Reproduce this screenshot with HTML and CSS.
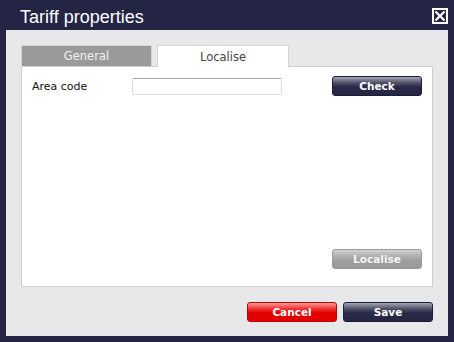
FILE: index.html
```html
<!DOCTYPE html>
<html>
<head>
<meta charset="utf-8">
<link rel="stylesheet" href="styles.css">
</head>
<body>
<div class="dialog">
  <div class="titlebar">
    <span class="title">Tariff properties</span>
    <span class="close"><svg width="12" height="12" viewBox="0 0 12 12"><path d="M1.5 1.5 L10.5 10.5 M10.5 1.5 L1.5 10.5" stroke="#fff" stroke-width="2.2" fill="none"/></svg></span>
  </div>
  <div class="body">
    <div class="tabs">
      <div class="tab inactive">General</div>
      <div class="tab active">Localise</div>
    </div>
    <div class="panel">
      <div class="row">
        <label class="label">Area code</label>
        <input class="input" type="text">
        <button class="btn dark check">Check</button>
      </div>
      <div class="bottom">
        <button class="btn grey">Localise</button>
      </div>
    </div>
    <div class="footer">
      <button class="btn red">Cancel</button>
      <button class="btn dark">Save</button>
    </div>
  </div>
</div>
</body>
</html>
```
FILE: styles.css
```css
html, body {
  margin: 0;
  padding: 0;
  background: #242444;
}
.dialog {
  width: 454px;
  height: 342px;
  background: #242444;
  display: flex;
  flex-direction: column;
  font-family: "DejaVu Sans", sans-serif;
}
.titlebar {
  height: 30px;
  display: flex;
  align-items: flex-start;
  justify-content: space-between;
  padding: 0 6px 0 20px;
  box-sizing: border-box;
}
.title {
  font-family: "Liberation Sans", Arial, sans-serif;
  font-size: 18px;
  color: #fff;
  margin-top: 7px;
  line-height: 20px;
}
.close {
  margin-top: 8px;
  width: 16px;
  height: 16px;
  box-sizing: border-box;
  border: 2px solid #fff;
  display: flex;
  align-items: center;
  justify-content: center;
}
.close svg { display: block; }
.body {
  margin: 0 6px 6px;
  background: #e8e8ea;
  flex: 1;
  padding: 15px 15px 14px;
  display: flex;
  flex-direction: column;
}
.tabs {
  display: flex;
  gap: 5px;
  height: 21px;
}
.tab {
  box-sizing: border-box;
  height: 21px;
  font-size: 11.5px;
  display: flex;
  align-items: center;
  justify-content: center;
  border: 1px solid #d4d4d4;
  border-bottom: none;
}
.tab.inactive {
  width: 131px;
  background: #9a9a9a;
  color: #f0f0f0;
}
.tab.active {
  width: 132px;
  background: #fff;
  color: #444;
  height: 22px;
  position: relative;
  z-index: 1;
}
.panel {
  height: 221px;
  box-sizing: border-box;
  background: #fff;
  border: 1px solid #cfcfcf;
  display: flex;
  flex-direction: column;
  padding: 9px 10px 17px 10px;
}
.row {
  display: flex;
  align-items: center;
  height: 20px;
}
.label {
  font-size: 11px;
  color: #111;
  width: 100px;
}
.input {
  width: 150px;
  height: 17px;
  box-sizing: border-box;
  border: 1px solid #ddd;
  border-top-color: #aaa;
  border-radius: 2px;
  margin: 0;
  padding: 0;
  background: #fff;
}
.bottom {
  margin-top: auto;
  display: flex;
  justify-content: flex-end;
}
.btn {
  width: 90px;
  height: 20px;
  box-sizing: border-box;
  border-radius: 3px;
  font-family: "DejaVu Sans", sans-serif;
  font-weight: bold;
  font-size: 10.5px;
  color: #fff;
  padding: 0;
  margin: 0;
  cursor: pointer;
}
.btn.check { margin-left: auto; }
.btn.dark {
  border: 1px solid #1c1c36;
  background: linear-gradient(#a6a6b6 0%, #55556e 30%, #2a2a48 55%, #252545 100%);
}
.btn.grey {
  border: 1px solid #9a9a9a;
  background: linear-gradient(#d2d2d2 0%, #b0b0b0 35%, #9e9e9e 60%, #9a9a9a 100%);
  color: #f4f4f4;
}
.btn.red {
  border: 1px solid #c00000;
  background: linear-gradient(#ff9a9a 0%, #f03a3a 30%, #e00000 55%, #e00000 100%);
}
.footer {
  margin-top: 15px;
  display: flex;
  justify-content: flex-end;
  gap: 6px;
}
```
